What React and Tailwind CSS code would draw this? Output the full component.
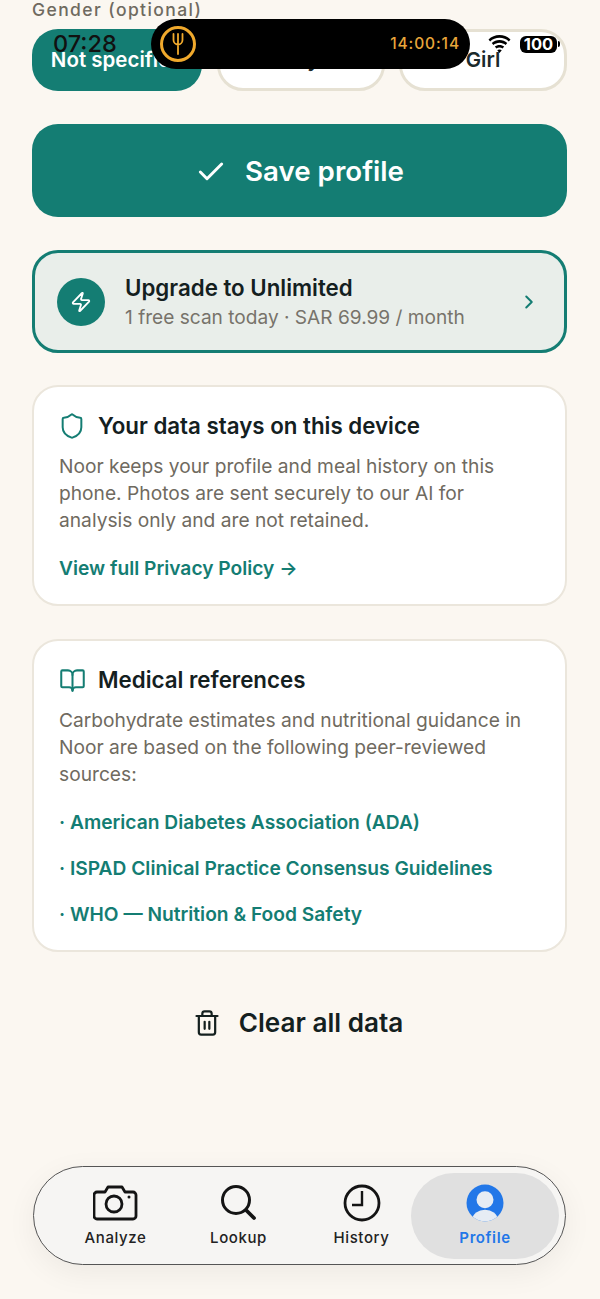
import React from "react";
import { Check, ChevronRight, Zap, Shield, BookOpen, Trash2 } from "lucide-react";

function Pill({ active, wide, children }) {
  const width = wide ? "w-[170px]" : "w-[168px]";
  return (
    <div className={active
      ? `${width} h-[62px] rounded-[26px] bg-[#147d73] text-white flex items-center justify-center text-[20.500px] font-semibold whitespace-nowrap`
      : `${width} h-[62px] rounded-[26px] bg-white border-[3px] border-[#e6e1d3] text-[#1b2a2c] flex items-center justify-center text-[20.500px] font-semibold whitespace-nowrap`}>
      {children}
    </div>
  );
}

function Card({ icon, title, children }) {
  return (
    <section className="rounded-[26px] bg-white border-2 border-[#ebe6dc] px-[25px] pt-[23px] pb-[22px]">
      <div className="flex items-center gap-[12px]">
        {icon}
        <h2 className="text-[22.300px] leading-[32px] font-semibold text-[#14201f]">{title}</h2>
      </div>
      {children}
    </section>
  );
}

function NavItem({ icon, label, active }) {
  return (
    <div className={active
      ? "shrink-0 w-[148px] h-[86px] -ml-[12px] rounded-[43px] bg-[#e0e0e0] flex flex-col items-center justify-center"
      : "shrink-0 w-[123px] h-[86px] flex flex-col items-center justify-center"}>
      <div className="h-[40px] flex items-center justify-center">{icon}</div>
      <div className={active
        ? "mt-[5px] text-[15px] leading-[20px] font-semibold tracking-[0.6px] text-[#2277e8]"
        : "mt-[5px] text-[15px] leading-[20px] font-medium tracking-[0.6px] text-[#222222]"}>{label}</div>
    </div>
  );
}

export default function App() {
  return (
    <div className="relative w-[600px] h-[1299px] overflow-hidden bg-[#fbf7f1] font-['Inter',sans-serif]">
      <main className="pl-[32px] pr-[33px] flex flex-col">
        <div className="h-[29px] text-[17.500px] leading-[20px] font-medium tracking-[1.400px] text-[#6f6a60]">Gender (optional)</div>
        <div className="flex justify-between">
          <Pill active wide>Not specified</Pill>
          <Pill>Boy</Pill>
          <Pill>Girl</Pill>
        </div>
        <button className="mt-[33px] h-[93px] pt-[3px] rounded-[26px] bg-[#147d73] text-white flex items-center justify-center gap-[18px] text-[27.700px] font-semibold">
          <Check size={32} strokeWidth={2.2} />
          Save profile
        </button>
        <div className="mt-[33px] h-[103px] rounded-[26px] border-[3px] border-[#147d73] bg-[#e9eeea] flex items-center pl-[22px] pr-[24px]">
          <div className="w-[48px] h-[48px] rounded-full bg-[#147d73] flex items-center justify-center">
            <Zap size={22} strokeWidth={2} className="text-white" />
          </div>
          <div className="ml-[20px] flex-1 pt-[1px]">
            <div className="text-[22.300px] leading-[30px] font-semibold text-[#14201f]">Upgrade to Unlimited</div>
            <div className="text-[19.100px] leading-[28px] text-[#77736a]">1 free scan today · SAR 69.99 / month</div>
          </div>
          <ChevronRight size={22} strokeWidth={2.2} className="text-[#147d73]" />
        </div>
        <div className="mt-[32px]">
          <Card icon={<Shield size={28} strokeWidth={1.7} className="-ml-[1px] text-[#147d73]" />} title="Your data stays on this device">
            <p className="mt-[11px] text-[19.200px] leading-[27px] text-[#6f6a60]">Noor keeps your profile and meal history on this phone. Photos are sent securely to our AI for analysis only and are not retained.</p>
            <p className="mt-[21px] text-[19.200px] leading-[27px] font-semibold text-[#147d73]">View full Privacy Policy →</p>
          </Card>
        </div>
        <div className="mt-[33px]">
          <Card icon={<BookOpen size={27} strokeWidth={1.8} className="text-[#147d73]" />} title="Medical references">
            <p className="mt-[11px] text-[19.200px] leading-[27px] text-[#6f6a60]">Carbohydrate estimates and nutritional guidance in Noor are based on the following peer-reviewed sources:</p>
            <ul className="mt-[21px] flex flex-col gap-[19px] text-[19.200px] leading-[27px] font-semibold text-[#147d73]">
              <li>· American Diabetes Association (ADA)</li>
              <li>· ISPAD Clinical Practice Consensus Guidelines</li>
              <li>· WHO — Nutrition &amp; Food Safety</li>
            </ul>
          </Card>
        </div>
        <button className="mt-[49px] h-[44px] pr-[3px] flex items-center justify-center gap-[18px] text-[26.100px] font-semibold text-[#14201f]">
          <Trash2 size={28} strokeWidth={1.9} />
          Clear all data
        </button>
      </main>

      <div className="absolute left-[151px] top-[19px] w-[319px] h-[50px] rounded-[25px] bg-black flex items-center justify-between pl-[9px] pr-[10px]">
        <div className="w-[36px] h-[36px] rounded-full border-[3px] border-[#f0a92c] flex items-center justify-center">
          <svg width="12" height="22" viewBox="0 0 12 22" fill="none" stroke="#f0a92c" strokeWidth="1.800" strokeLinecap="round">
            <path d="M1.500 1v6a4.500 4.500 0 0 0 9 0V1M6 1v20" />
          </svg>
        </div>
        <span className="text-[15.500px] font-medium tracking-[0.9px] text-[#e9a63a]">14:00:14</span>
      </div>
      <div className="absolute left-[53px] top-[30px] text-[23.500px] leading-[28px] font-medium text-[#111111]">07:28</div>
      <div className="absolute left-[487px] top-[35px] flex items-center gap-[8px]">
        <svg width="25" height="18" viewBox="0 0 26 20" fill="#000">
          <path d="M13 3c4 0 7.600 1.500 10.400 4.100l1.800-2.200C21.900 1.900 17.700 0 13 0S4.100 1.900.8 4.900l1.800 2.200C5.400 4.500 9 3 13 3z" />
          <path d="M13 8.500c2.600 0 5 1 6.800 2.600l1.800-2.200C19.300 6.800 16.300 5.600 13 5.600s-6.300 1.200-8.600 3.300l1.800 2.200C8 9.500 10.400 8.500 13 8.500z" />
          <path d="M13 13.800c1.300 0 2.500.5 3.400 1.300l1.800-2.200C16.800 11.700 15 11 13 11s-3.800.7-5.200 1.900l1.800 2.200c.9-.8 2.100-1.300 3.400-1.300zM13 16c-1 0-1.900.4-2.500 1l2.500 3 2.500-3c-.6-.6-1.500-1-2.500-1z" />
        </svg>
        <div className="relative w-[37px] h-[17px] rounded-[6px] bg-black flex items-center justify-center text-[16.500px] leading-[17px] font-bold text-white">100
          <span className="absolute -right-[3px] top-[5px] w-[2px] h-[6px] rounded-r-sm bg-black"></span>
        </div>
      </div>

      <nav className="absolute left-[33px] top-[1166px] w-[533px] h-[99px] rounded-[50px] border border-[#555555] bg-[#f6f5f3] shadow-[0_8px_30px_rgba(0,0,0,0.06)] flex items-center pl-[20px]">
        <NavItem label="Analyze" icon={
          <svg width="46" height="36" viewBox="1 0 46 36" fill="none" stroke="#141414" strokeWidth="2.800" strokeLinejoin="round">
            <path d="M5 7h8l3-5h14l3 5h8a3 3 0 0 1 3 3v21a3 3 0 0 1-3 3H5a3 3 0 0 1-3-3V10a3 3 0 0 1 3-3z" />
            <circle cx="22" cy="19" r="8" />
            <circle cx="37" cy="12" r="1.500" fill="#141414" stroke="none" />
          </svg>} />
        <NavItem label="Lookup" icon={
          <svg width="36" height="36" viewBox="0 0 36 36" fill="none" stroke="#141414" strokeLinecap="round">
            <circle cx="15" cy="15" r="13.500" strokeWidth="3" />
            <path d="M25.500 25.500l7.500 7.500" strokeWidth="3.800" />
          </svg>} />
        <NavItem label="History" icon={
          <svg width="38" height="38" viewBox="0 0 38 38" fill="none" stroke="#141414" strokeWidth="2.800">
            <circle cx="19" cy="19" r="17" />
            <path d="M19 7v14H9" strokeWidth="2.400" />
          </svg>} />
        <NavItem active label="Profile" icon={
          <svg width="38" height="38" viewBox="0 0 38 38">
            <defs>
              <clipPath id="avatar-clip"><circle cx="19" cy="19" r="18.500" /></clipPath>
            </defs>
            <circle cx="19" cy="19" r="18.500" fill="#2277e8" />
            <circle cx="19" cy="15.700" r="8.500" fill="#e6ecf4" />
            <ellipse cx="19" cy="35" rx="12.500" ry="9.300" fill="#e6ecf4" clipPath="url(#avatar-clip)" />
          </svg>} />
      </nav>
    </div>
  );
}
